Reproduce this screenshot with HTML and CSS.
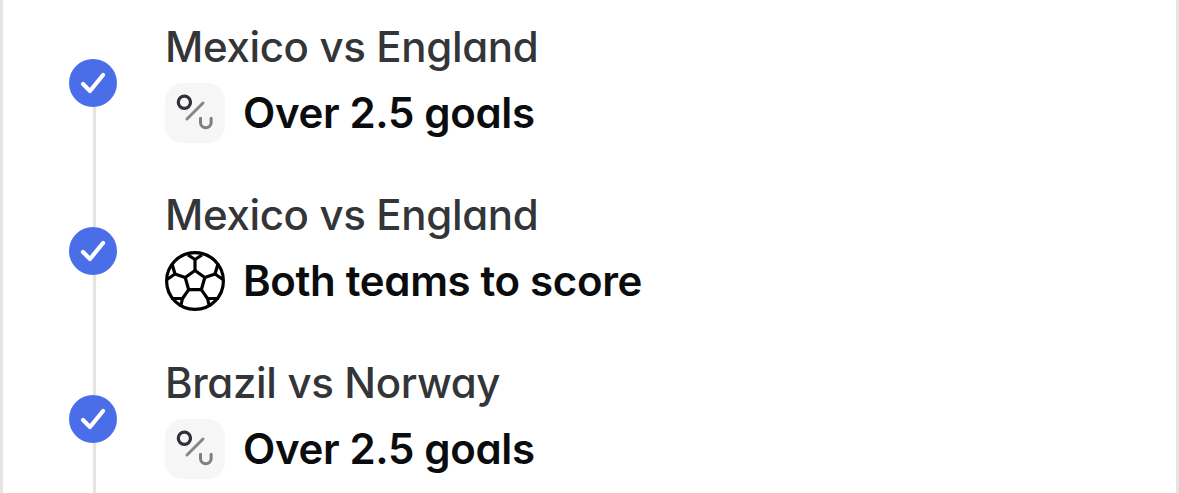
FILE: index.html
```html
<!DOCTYPE html>
<html lang="en">
<head>
    <meta charset="UTF-8">
    <title>Bet Builder</title>
    <link rel="stylesheet" href="styles.css">
</head>
<body>
    <!-- Shared icons -->
    <svg class="icon-defs" aria-hidden="true">
        <symbol id="icon-check" viewBox="0 0 48 48">
            <path d="M14 25L21 32L34 16" fill="none" stroke="#fff" stroke-width="4.2" stroke-linecap="round" stroke-linejoin="round"/>
        </symbol>
        <symbol id="icon-over-under" viewBox="0 0 60 60">
            <g fill="none" stroke-linecap="round">
                <circle cx="19.4" cy="19.3" r="6.1" stroke="#2f3134" stroke-width="3.2"/>
                <path d="M22 36L38 20" stroke="#85868a" stroke-width="3"/>
                <path d="M35.5 35.2V39.5a5.3 5.3 0 0 0 10.6 0V35.2" stroke="#7d7e82" stroke-width="3"/>
            </g>
        </symbol>
        <symbol id="icon-ball" viewBox="0 0 60 60">
            <g fill="none" stroke="#000" stroke-width="3.2" stroke-linejoin="round">
                <circle cx="30" cy="30" r="28.4"/>
                <path d="M30 19.5L39.8 26.5L36.3 38.7H23.7L20.2 26.500Z"/>
                <path d="M30 19.500V8.500M39.800 26.500L50 23M36.300 38.700L42.500 47.500M23.700 38.700L17.500 47.500M20.200 26.500L10 23"/>
                <path d="M23 4L30 8.500L37 4M53 13L50 23L58 28.500M54 47.500H42.500L44.500 56M15.500 56L17.500 47.500H6M2 28.500L10 23L7 13"/>
            </g>
        </symbol>
    </svg>

    <div class="slip">
        <div class="selection">
            <div class="rail">
                <svg class="check"><use href="#icon-check"/></svg>
            </div>
            <div class="details">
                <div class="match">Mexico vs England</div>
                <div class="pick">
                    <svg class="pick-icon tile"><use href="#icon-over-under"/></svg>
                    <span class="pick-name">Over 2.5 goals</span>
                </div>
            </div>
        </div>

        <div class="selection">
            <div class="rail">
                <svg class="check"><use href="#icon-check"/></svg>
            </div>
            <div class="details">
                <div class="match">Mexico vs England</div>
                <div class="pick">
                    <svg class="pick-icon"><use href="#icon-ball"/></svg>
                    <span class="pick-name">Both teams to score</span>
                </div>
            </div>
        </div>

        <div class="selection">
            <div class="rail">
                <svg class="check"><use href="#icon-check"/></svg>
            </div>
            <div class="details">
                <div class="match">Brazil vs Norway</div>
                <div class="pick">
                    <svg class="pick-icon tile"><use href="#icon-over-under"/></svg>
                    <span class="pick-name">Over 2.5 goals</span>
                </div>
            </div>
        </div>
    </div>
</body>
</html>
```
FILE: styles.css
```css
:root {
    --accent-color: #4a6de8;
    --line-color: #e4e4e5;
    --tile-color: #f6f6f7;
    --match-color: #333538;
    --pick-color: #0b0c0e;
}

* {
    box-sizing: border-box;
}

body {
    margin: 0;
    background: #fff;
    font-family: Inter, "Liberation Sans", sans-serif;
    font-feature-settings: "cv11";
    letter-spacing: -0.35px;
}

.icon-defs {
    display: none;
}

.slip {
    height: 493px;
    padding: 20px 66px 0;
    border-left: 3px solid var(--line-color);
    border-right: 3px solid var(--line-color);
    overflow: hidden;
}

.selection {
    display: flex;
    gap: 48px;
    height: 168px;
}

.rail {
    display: flex;
    flex-direction: column;
    align-items: center;
    width: 48px;
}

/* connector above and below the check */
.rail::before,
.rail::after {
    content: "";
    width: 3px;
    margin-left: 3px;
    background: var(--line-color);
}

.rail::before {
    height: 39px;
}

.rail::after {
    flex: 1;
}

.selection:first-child .rail::before {
    background: none;
}

.check {
    display: block;
    flex: none;
    width: 48px;
    height: 48px;
    border-radius: 50%;
    background: var(--accent-color);
}

.match {
    font-size: 42px;
    font-weight: 500;
    line-height: 54px;
    color: var(--match-color);
    white-space: nowrap;
}

.pick {
    display: flex;
    align-items: center;
    gap: 18px;
    margin-top: 9px;
}

.pick-icon {
    display: block;
    width: 60px;
    height: 60px;
}

.tile {
    border-radius: 18px;
    background: var(--tile-color);
}

.pick-name {
    font-size: 42px;
    font-weight: 600;
    line-height: 60px;
    color: var(--pick-color);
    white-space: nowrap;
}
```
